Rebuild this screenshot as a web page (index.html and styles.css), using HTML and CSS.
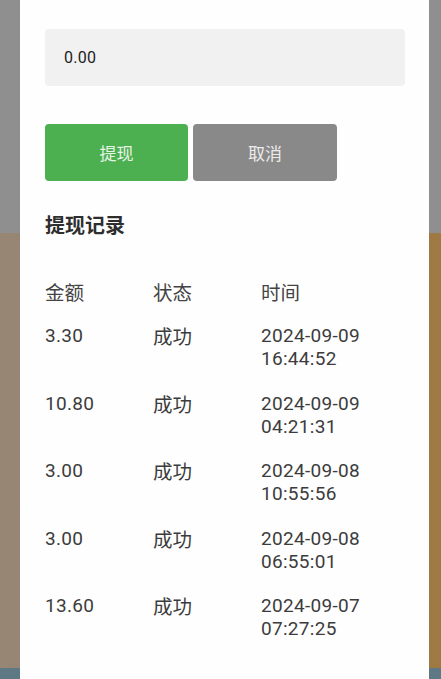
FILE: index.html
```html
<!DOCTYPE html>
<html lang="zh-CN">
<head>
<meta charset="utf-8">
<title>提现</title>
<link rel="stylesheet" href="styles.css">
</head>
<body>
<div class="modal">
  <div class="amount-input">0.00</div>
  <div class="actions">
    <button class="btn btn-primary">提现</button>
    <button class="btn btn-cancel">取消</button>
  </div>
  <h2 class="title">提现记录</h2>
  <div class="records">
    <div class="row head">
      <span class="cjk">金额</span><span class="cjk">状态</span><span class="cjk">时间</span>
    </div>
    <div class="row">
      <span class="num">3.30</span><span class="cjk">成功</span><span class="num">2024-09-09<br>16:44:52</span>
    </div>
    <div class="row">
      <span class="num">10.80</span><span class="cjk">成功</span><span class="num">2024-09-09<br>04:21:31</span>
    </div>
    <div class="row">
      <span class="num">3.00</span><span class="cjk">成功</span><span class="num">2024-09-08<br>10:55:56</span>
    </div>
    <div class="row">
      <span class="num">3.00</span><span class="cjk">成功</span><span class="num">2024-09-08<br>06:55:01</span>
    </div>
    <div class="row">
      <span class="num">13.60</span><span class="cjk">成功</span><span class="num">2024-09-07<br>07:27:25</span>
    </div>
  </div>
</div>
</body>
</html>
```

FILE: styles.css
```css
html, body {
  margin: 0;
  padding: 0;
  height: 679px;
  overflow: hidden;
}

body {
  font-family: Roboto, "Noto Sans CJK SC", sans-serif;
  color: #3a3a3a;
  background:
    linear-gradient(#8f8f8f, #8f8f8f) top / 100% 233px no-repeat,
    linear-gradient(#5e7984, #5e7984) bottom / 100% 11px no-repeat,
    linear-gradient(90deg, #978675 0%, #9a8160 50%, #9f7943 100%);
}

.modal {
  margin-left: 20px;
  width: 409px;
  height: 679px;
  box-sizing: border-box;
  background: #fefefe;
  padding: 29px 24px 0 25px;
}

.amount-input {
  height: 57px;
  background: #f1f1f1;
  border-radius: 4px;
  display: flex;
  align-items: center;
  padding-left: 19px;
  font-size: 16px;
  letter-spacing: 0.3px;
  color: #222;
}

.actions {
  display: flex;
  gap: 5px;
  margin-top: 38px;
}

.btn {
  width: 143px;
  height: 57px;
  border: none;
  border-radius: 4px;
  font-family: "Noto Sans CJK SC", sans-serif;
  font-size: 17px;
  padding: 0;
}

.btn-primary {
  background: #4caf50;
  color: #e4f3e4;
}

.btn-cancel {
  width: 144px;
  background: #898989;
  color: #ececec;
}

.title {
  margin: 30px 0 0;
  font-family: "Noto Sans CJK SC", sans-serif;
  font-size: 20px;
  line-height: 28px;
  font-weight: 700;
  color: #2e2e2e;
}

.records {
  margin-top: 31px;
}

.row {
  display: grid;
  grid-template-columns: 108px 108px 1fr;
  align-items: start;
  padding: 10.75px 0;
  font-size: 19px;
  line-height: 23px;
  letter-spacing: 0.3px;
  color: #3c3c3c;
}

.row .cjk {
  font-family: "Noto Sans CJK SC", sans-serif;
  font-size: 19.5px;
  letter-spacing: 0;
}

.row.head .cjk {
  margin-top: -1px;
}

.row.head {
  color: #444;
}
```
